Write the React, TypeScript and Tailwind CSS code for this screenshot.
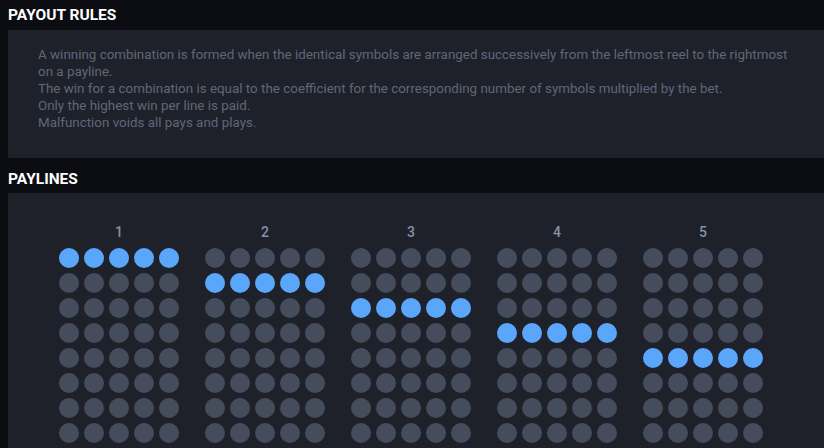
import React from "react";

const lines = [
  "A winning combination is formed when the identical symbols are arranged successively from the leftmost reel to the rightmost",
  "on a payline.",
  "The win for a combination is equal to the coefficient for the corresponding number of symbols multiplied by the bet.",
  "Only the highest win per line is paid.",
  "Malfunction voids all pays and plays.",
];

function Payline({ n, row }: { n: number; row: number }) {
  return (
    <div className="flex flex-col items-center w-[120px]">
      <div className="h-[20px] text-[14px] leading-[20px] text-[#8790a0] font-medium">{n}</div>
      <div className="mt-[6px] flex flex-col gap-[5px]">
        {Array.from({ length: 8 }).map((_, r) => (
          <div key={r} className="flex gap-[5px]">
            {Array.from({ length: 5 }).map((_, c) => (
              <div
                key={c}
                className={
                  r === row
                    ? "w-[20px] h-[20px] rounded-full bg-[#5aa6fb]"
                    : "w-[20px] h-[20px] rounded-full bg-[#454d5c]"
                }
              />
            ))}
          </div>
        ))}
      </div>
    </div>
  );
}

export default function App() {
  return (
    <div
      className="w-[824px] h-[448px] overflow-hidden bg-[#0c0d12]"
      style={{ fontFamily: "Roboto, 'Liberation Sans', sans-serif" }}
    >
      <div className="pl-[8px] h-[30px] flex items-center pt-[2px]">
        <span className="text-white font-bold text-[15.5px] leading-none">PAYOUT RULES</span>
      </div>
      <div className="ml-[8px] bg-[#1e212a] h-[128px] pl-[30px] pt-[16px]">
        <div className="text-[13.4px] leading-[17px] text-[#5f6779] whitespace-nowrap">
          {lines.map((l, i) => (
            <div key={i}>{l}</div>
          ))}
        </div>
      </div>
      <div className="pl-[8px] h-[35px] flex items-center pt-[8px]">
        <span className="text-white font-bold text-[15.5px] leading-none">PAYLINES</span>
      </div>
      <div className="ml-[8px] bg-[#1e212a] h-[260px] pl-[51px] pt-[29px]">
        <div className="flex gap-[26px]">
          {[0, 1, 2, 3, 4].map((i) => (
            <Payline key={i} n={i + 1} row={i} />
          ))}
        </div>
      </div>
    </div>
  );
}
